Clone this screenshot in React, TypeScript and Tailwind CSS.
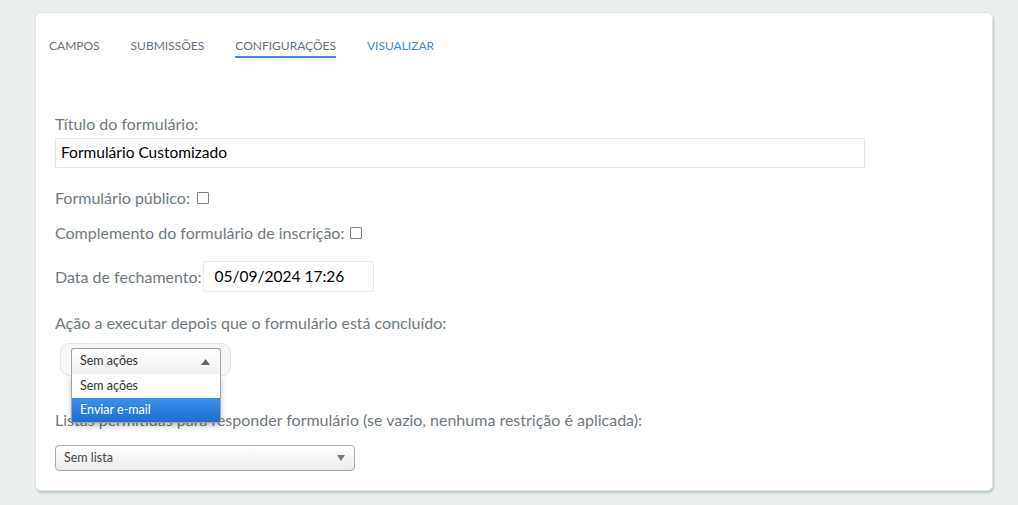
export default function App() {
  const tabs = ["CAMPOS", "SUBMISSÕES", "CONFIGURAÇÕES", "VISUALIZAR"];

  return (
    <div
      className="min-h-screen w-[1018px] h-[505px] bg-[#e9eeee] pt-[12px] pl-[35px]"
      style={{ fontFamily: "Lato, 'Open Sans', sans-serif" }}
    >
      <div className="w-[958px] h-[479px] bg-white rounded-[6px] border border-[#dfe4e4] shadow-[1px_2px_2px_rgba(0,0,0,0.18)]">
        {/* tabs */}
        <div className="flex gap-[31px] pl-[13px] pt-[25px]">
          {tabs.map((t, i) => (
            <div
              key={t}
              className={
                "text-[12px] leading-[16px] pb-[2px] border-b-2 " +
                (i === 2
                  ? "text-[#67737a] border-[#3b8ae0]"
                  : i === 3
                  ? "text-[#3b87e2] border-transparent"
                  : "text-[#67737a] border-transparent")
              }
            >
              {t}
            </div>
          ))}
        </div>

        <div className="pl-[19px] pt-[57px] text-[16px] text-[#6f7a7e]">
          <div className="leading-[18px]">Título do formulário:</div>
          <div className="mt-[5px] w-[810px] h-[30px] border border-[#e6e8e8] flex items-center pl-[5px] text-[15.5px] text-black">
            Formulário Customizado
          </div>

          <div className="mt-[21px] flex items-center leading-[18px]">
            Formulário público:
            <span className="ml-[7px] w-[12px] h-[12px] border border-[#7a8284] rounded-[1px] inline-block" />
          </div>

          <div className="mt-[17px] flex items-center leading-[18px]">
            Complemento do formulário de inscrição:
            <span className="ml-[6px] w-[12px] h-[12px] border border-[#7a8284] rounded-[1px] inline-block" />
          </div>

          <div className="mt-[19px] flex items-center">
            Data de fechamento:
            <div className="ml-[1px] w-[171px] h-[31px] border border-[#e8eaea] rounded-[3px] flex items-center pl-[11px] text-[15.5px] text-black">
              05/09/2024 17:26
            </div>
          </div>

          <div className="mt-[22px] leading-[18px]">Ação a executar depois que o formulário está concluído:</div>

          <div className="relative mt-[11px] ml-[5px] w-[171px] h-[33px] rounded-[9px] border border-[#e2e5e5] bg-[#f6f7f7] pl-[10px] pt-[4px]">
            <div className="w-[150px] h-[26px] border border-[#9aa5ae] border-b-0 rounded-t-[3px] bg-gradient-to-b from-white to-[#f1f1f1] flex items-center justify-between pl-[8px] pr-[10px] text-[12.5px] text-[#333]">
              <span>Sem ações</span>
              <svg width="9" height="6" viewBox="0 0 9 6">
                <path d="M4.5 0 L9 6 L0 6 Z" fill="#666" />
              </svg>
            </div>
            <div className="absolute left-[10px] top-[30px] w-[150px] z-10 bg-white border border-[#9aa5ae] border-t-0 rounded-b-[3px] shadow-[0_3px_5px_rgba(0,0,0,0.25)] text-[12.5px]">
              <div className="h-[24px] flex items-center pl-[8px] text-[#333]">Sem ações</div>
              <div className="h-[24px] flex items-center pl-[8px] text-white bg-gradient-to-b from-[#3b8fe8] to-[#1f6fd3]">
                Enviar e-mail
              </div>
            </div>
          </div>

          <div className="mt-[35px] leading-[18px]">
            Listas permitidas para responder formulário (se vazio, nenhuma restrição é aplicada):
          </div>

          <div className="mt-[16px] w-[300px] h-[26px] border border-[#a3acb4] rounded-[4px] bg-gradient-to-b from-white to-[#ececec] flex items-center justify-between pl-[8px] pr-[9px] text-[12.5px] text-[#444]">
            <span>Sem lista</span>
            <svg width="8" height="6" viewBox="0 0 8 6">
              <path d="M0 0 L8 0 L4 6 Z" fill="#777" />
            </svg>
          </div>
        </div>
      </div>
    </div>
  );
}
